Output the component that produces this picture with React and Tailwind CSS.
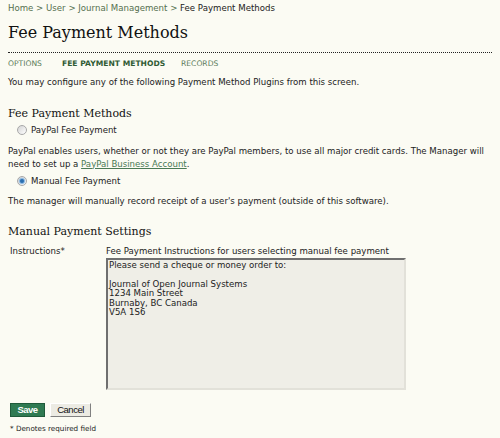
import React from 'react';

const sans = "font-['DejaVu_Sans',Verdana,sans-serif]";
const serif = "font-['DejaVu_Serif',Georgia,serif]";

const Radio = ({ checked }) => (
  <span className="inline-flex h-[10px] w-[10px] items-center justify-center rounded-full border border-[#a8a8a8] bg-gradient-to-br from-[#d4d4d4] to-[#ffffff]">
    {checked && <span className="h-[4px] w-[4px] rounded-full bg-[#2b6fb0] shadow-[0_0_1px_1px_#7fb2e0]" />}
  </span>
);

export default function App() {
  const instructions = `Please send a cheque or money order to:

Journal of Open Journal Systems
1234 Main Street
Burnaby, BC Canada
V5A 1S6`;

  return (
    <div className={`min-h-[438px] w-[500px] overflow-hidden bg-[#fbfbf3] px-2 pt-[2px] text-[8.6px] leading-[13px] text-[#222] ${sans}`}>
      <div className="text-[#55704f]">
        <span>Home</span> &gt; <span>User</span> &gt; <span>Journal Management</span> &gt;{' '}
        <span className="text-[#222]">Fee Payment Methods</span>
      </div>

      <h1 className={`mt-[8px] text-[16px] leading-[20px] text-[#111] ${serif}`}>Fee Payment Methods</h1>
      <div className="mt-[9px] border-b border-dotted border-[#222]" />

      <div className="mt-[4.5px] flex text-[7.6px] leading-[11px] text-[#5b7b5b]">
        <span className="w-[54px]">OPTIONS</span>
        <span className="w-[119px] font-bold text-[#2f5a33]">FEE PAYMENT METHODS</span>
        <span>RECORDS</span>
      </div>

      <p className="mt-[7px]">You may configure any of the following Payment Method Plugins from this screen.</p>

      <h3 className={`mt-[17.5px] text-[11px] leading-[16px] text-[#111] ${serif}`}>Fee Payment Methods</h3>
      <div className="mt-[1.5px] ml-[9px] flex h-[13px] items-center gap-[4px]">
        <Radio />
        <span>PayPal Fee Payment</span>
      </div>
      <p className="mt-[8px]">
        PayPal enables users, whether or not they are PayPal members, to use all major credit cards. The Manager will
        need to set up a <span className="text-[#4a7a55] underline">PayPal Business Account</span>.
      </p>
      <div className="mt-[4px] ml-[9px] flex h-[13px] items-center gap-[4px]">
        <Radio checked />
        <span>Manual Fee Payment</span>
      </div>
      <p className="mt-[7px]">The manager will manually record receipt of a user's payment (outside of this software).</p>

      <h3 className={`mt-[16.5px] text-[11px] leading-[16px] text-[#111] ${serif}`}>Manual Payment Settings</h3>
      <div className="mt-[4.5px] flex">
        <div className="w-[98px] pl-[2px]">Instructions*</div>
        <div>
          <div>Fee Payment Instructions for users selecting manual fee payment</div>
          <textarea
            readOnly
            defaultValue={instructions}
            className={`block h-[132px] w-[300px] resize-none border-2 border-t-[#6f6f6f] border-l-[#6f6f6f] border-r-[#e2e1d9] border-b-[#e2e1d9] bg-[#efeee7] px-[1px] pt-[1px] text-[8.6px] leading-[9.6px] text-[#222] outline-none ${sans}`}
          />
        </div>
      </div>

      <div className="mt-[13px] flex gap-[5px] pl-[2px] font-['Liberation_Sans',Arial,sans-serif] text-[9.5px] leading-[12px]">
        <button className="h-[14px] w-[35px] border border-[#1f5a3a] bg-[#2f7a52] font-bold tracking-[-0.5px] text-white">Save</button>
        <button className="h-[14px] w-[41px] border border-t-white border-l-white border-r-[#808080] border-b-[#808080] bg-[#ecebe3] tracking-[-0.5px] text-[#111]">Cancel</button>
      </div>

      <p className="mt-[6.5px] pl-[2px] text-[7.2px] leading-[11px]">* Denotes required field</p>
    </div>
  );
}
